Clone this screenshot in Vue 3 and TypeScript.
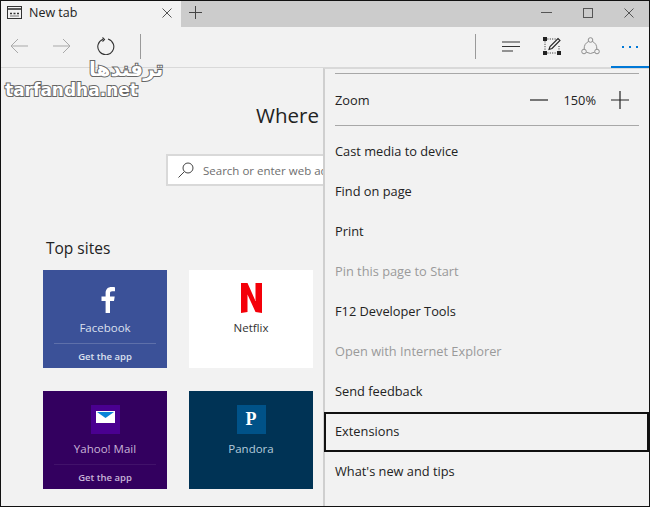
<template>
  <div class="window">
    <!-- Tab strip -->
    <header class="tabbar">
      <div class="tab">
        <svg class="tab-icon" width="15" height="13" viewBox="0 0 15 13" fill="none" stroke="#333">
          <rect x="0.5" y="0.5" width="14" height="12" />
          <path d="M1 3h13" stroke-width="1.6" />
          <path d="M3 7.500h2M6.500 7.500h2M10 7.500h2" stroke-width="1.6" />
          <path d="M3 10h9" stroke-width="1" stroke="#777" />
        </svg>
        <span class="tab-title">New tab</span>
        <svg class="tab-close" width="10" height="10" viewBox="0 0 10 10" stroke="#555" fill="none">
          <path d="M0.5 0.5l9 9M9.500 0.5l-9 9" />
        </svg>
      </div>
      <svg class="new-tab" width="13" height="13" viewBox="0 0 13 13" stroke="#444" fill="none">
        <path d="M6.500 0v13M0 6.500h13" />
      </svg>
      <div class="win-controls">
        <svg width="11" height="11" viewBox="0 0 11 11" stroke="#555" fill="none"><path d="M0 5.500h11" /></svg>
        <svg width="10" height="10" viewBox="0 0 10 10" stroke="#555" fill="none"><rect x="0.5" y="0.5" width="9" height="9" /></svg>
        <svg width="10" height="10" viewBox="0 0 10 10" stroke="#555" fill="none"><path d="M0.5 0.5l9 9M9.500 0.5l-9 9" /></svg>
      </div>
    </header>

    <!-- Navigation toolbar -->
    <nav class="toolbar">
      <svg width="18" height="16" viewBox="0 0 18 16" stroke="#a9a9a9" fill="none">
        <path d="M18 8H1M8 1L1 8l7 7" />
      </svg>
      <svg class="forward" width="18" height="16" viewBox="0 0 18 16" stroke="#a9a9a9" fill="none">
        <path d="M0 8h17M10 1l7 7-7 7" />
      </svg>
      <svg class="refresh" width="18" height="18" viewBox="0 0 18 18" stroke="#333" fill="none">
        <path d="M6 2.200a8 8 0 1 0 5-.2" stroke-width="1.100" />
        <path d="M5.500 0.5l2 2-2 2" stroke-width="1.100" />
      </svg>
      <span class="tool-sep first"></span>
      <span class="spacer"></span>
      <span class="tool-sep"></span>
      <svg class="hub" width="18" height="11" viewBox="0 0 18 11" stroke="#333" fill="none">
        <path d="M0 1h18M0 5.500h18M0 10h11" stroke-width="1.200" />
      </svg>
      <svg class="note" width="18" height="18" viewBox="0 0 18 18" fill="none" stroke="#222">
        <path d="M2 2h12M2 2v14M2 16h14M16 9v7" stroke-dasharray="1 1.400" />
        <rect x="0.5" y="0.5" width="3" height="3" fill="#222" />
        <rect x="0.5" y="14.500" width="3" height="3" fill="#222" />
        <rect x="14.500" y="14.500" width="3" height="3" fill="#222" />
        <path d="M6 12.500l1-3L15 1.500l2 2L9 11.500z" stroke-width="1.100" fill="#f2f2f2" />
      </svg>
      <svg class="share" width="19" height="18" viewBox="0 0 19 18" fill="none" stroke="#8f8f8f">
        <circle cx="9.500" cy="3" r="2.300" />
        <circle cx="3" cy="14.500" r="2.300" />
        <circle cx="16" cy="14.500" r="2.300" />
        <path d="M7.700 4.400a8 8 0 0 0-4.500 7.800M11.300 4.400a8 8 0 0 1 4.500 7.800M5.300 15.200a8 8 0 0 0 8.400 0" />
      </svg>
      <div class="more">
        <i></i><i></i><i></i>
      </div>
    </nav>

    <!-- New tab page -->
    <main class="page">
      <h1 class="headline">Where to next?</h1>
      <div class="search">
        <svg width="16" height="16" viewBox="0 0 16 16" fill="none" stroke="#444">
          <circle cx="10" cy="6" r="5" />
          <path d="M6.300 9.700L0.500 15.500" />
        </svg>
        <span class="search-text">Search or enter web address</span>
      </div>
      <h2 class="sites-title">Top sites</h2>
      <div class="sites">
        <div v-for="site in sites" :key="site.name" class="site" :class="site.cls">
          <div class="site-logo">
            <svg v-if="site.cls === 'facebook'" class="fb-mark" width="14" height="26" viewBox="0 0 14 26">
              <path fill="#fff" d="M9 26V14h4l.7-4.600H9V6.500c0-1.400.4-2.300 2.300-2.300H14V.2C13.500.1 12.100 0 10.500 0 7 0 4.600 2.100 4.600 6V9.400H.5V14h4.100v12z" />
            </svg>
            <svg v-else-if="site.cls === 'netflix'" width="21" height="30" viewBox="0 0 21 30">
              <path fill="#f40009" d="M0 0h6.500l8 18V0H21v30l-6.500-1L6.500 11.500V29L0 30z" />
            </svg>
            <span v-else-if="site.cls === 'yahoo'" class="tile yahoo-tile">
              <svg width="19" height="12" viewBox="0 0 19 12">
                <rect width="19" height="12" fill="#fff" />
                <path d="M1 1h17L9.500 7z" fill="#0a84d8" />
              </svg>
            </span>
            <span v-else class="tile pandora-tile">P</span>
          </div>
          <div class="site-name">{{ site.name }}</div>
          <div v-if="site.app" class="site-app">Get the app</div>
        </div>
      </div>

      <!-- More actions menu -->
      <aside class="menu">
        <div class="menu-rule top"></div>
        <div class="zoom-row">
          <span>Zoom</span>
          <div class="zoom-ctl">
            <svg width="18" height="2" viewBox="0 0 18 2"><path d="M0 1h18" stroke="#222" stroke-width="1.200" /></svg>
            <span class="zoom-val">150%</span>
            <svg width="18" height="18" viewBox="0 0 18 18"><path d="M0 9h18M9 0v18" stroke="#222" stroke-width="1.200" /></svg>
          </div>
        </div>
        <div class="menu-rule"></div>
        <div class="menu-list">
          <div
            v-for="item in items"
            :key="item.label"
            class="menu-item"
            :class="{ disabled: item.disabled, focused: item.focused }"
          >{{ item.label }}</div>
        </div>
      </aside>
    </main>

    <!-- Watermark -->
    <div class="watermark">
      <div class="wm-fa">ترفندها</div>
      <div class="wm-en">tarfandha.net</div>
    </div>
  </div>
</template>

<script setup lang="ts">
interface Site {
  name: string
  cls: string
  app: boolean
}

interface MenuItem {
  label: string
  disabled?: boolean
  focused?: boolean
}

const sites: Site[] = [
  { name: 'Facebook', cls: 'facebook', app: true },
  { name: 'Netflix', cls: 'netflix', app: false },
  { name: 'Yahoo! Mail', cls: 'yahoo', app: true },
  { name: 'Pandora', cls: 'pandora', app: false }
]

const items: MenuItem[] = [
  { label: 'Cast media to device' },
  { label: 'Find on page' },
  { label: 'Print' },
  { label: 'Pin this page to Start', disabled: true },
  { label: 'F12 Developer Tools' },
  { label: 'Open with Internet Explorer', disabled: true },
  { label: 'Send feedback' },
  { label: 'Extensions', focused: true },
  { label: "What's new and tips" }
]
</script>

<style>
html,
body {
  margin: 0;
  overflow: hidden;
}
</style>

<style scoped>
.window {
  position: relative;
  width: 650px;
  height: 507px;
  box-sizing: border-box;
  border: 1px solid #111;
  background: #f2f2f2;
  display: flex;
  flex-direction: column;
  overflow: hidden;
  font-family: "Open Sans", "Noto Sans", sans-serif;
  color: #222;
}

.tabbar {
  height: 26px;
  background: #cccccc;
  display: flex;
  align-items: center;
  flex-shrink: 0;
}

.tab {
  width: 180px;
  height: 100%;
  background: #f2f2f2;
  display: flex;
  align-items: center;
  box-sizing: border-box;
  padding: 0 9px 3px 6px;
}

.tab-title {
  margin-left: 7px;
  font-size: 12.500px;
  flex: 1;
}

.new-tab {
  margin: 0 0 3px 8px;
}

.win-controls {
  margin-left: auto;
  display: flex;
  align-items: center;
  gap: 31px;
  padding: 0 15px 3px 0;
}

.toolbar {
  height: 41px;
  display: flex;
  align-items: center;
  padding: 0 0 2px 9px;
  box-sizing: border-box;
  border-bottom: 1px solid #d9d9d9;
  flex-shrink: 0;
}

.forward {
  margin-left: 25px;
}

.refresh {
  margin-left: 26px;
}

.tool-sep {
  width: 1px;
  height: 25px;
  background: #9a9a9a;
  margin-left: 25px;
}

.spacer {
  flex: 1;
}

.hub {
  margin-left: 26px;
}

.note {
  margin-left: 23px;
}

.share {
  margin-left: 20px;
}

.more {
  align-self: stretch;
  width: 38px;
  margin: 0 0 -3px 11px;
  border-bottom: 2px solid #0078d7;
  box-sizing: border-box;
  display: flex;
  align-items: center;
  justify-content: center;
  gap: 5px;
}

.more i {
  width: 2px;
  height: 2px;
  background: #0078d7;
}

.page {
  flex: 1;
  position: relative;
  min-height: 0;
  overflow: hidden;
}

.headline {
  margin: 33px 0 0;
  width: 322px;
  box-sizing: border-box;
  overflow: hidden;
  font-size: 20.500px;
  font-weight: 400;
  line-height: 28px;
  padding-left: 255px;
  white-space: nowrap;
  color: #222;
}

.search {
  margin: 25px 0 0 165px;
  width: 500px;
  height: 32px;
  box-sizing: border-box;
  background: #fff;
  border: 2px solid #d9d9d9;
  display: flex;
  align-items: center;
  padding-left: 10px;
  gap: 9px;
}

.search-text {
  font-size: 11.500px;
  color: #6e6e6e;
  white-space: nowrap;
}

.sites-title {
  margin: 50px 0 0 45px;
  font-size: 15.500px;
  font-weight: 400;
  line-height: 24px;
  color: #222;
}

.sites {
  margin: 10px 0 0 42px;
  display: grid;
  grid-template-columns: 124px 124px;
  grid-auto-rows: 98px;
  column-gap: 22px;
  row-gap: 23px;
}

.site {
  display: flex;
  flex-direction: column;
  align-items: center;
  position: relative;
}

.site-logo {
  height: 44px;
  margin-top: 6px;
  display: flex;
  align-items: center;
  justify-content: center;
}

.fb-mark {
  margin: 4px 0 0 6px;
}

.site-name {
  margin-top: -1px;
  font-size: 11.500px;
  line-height: 18px;
}

.site-app {
  position: absolute;
  left: 11px;
  right: 11px;
  top: 73px;
  height: 25px;
  line-height: 25px;
  text-align: center;
  font-size: 9.500px;
  font-weight: 600;
  border-top: 1px solid rgba(255, 255, 255, 0.18);
}

.facebook {
  background: #3b5198;
  color: #dbe0ef;
}

.netflix {
  background: #fff;
  color: #333;
}

.yahoo {
  background: #33005f;
  color: #c8b4d8;
}

.yahoo .site-app {
  border-top-color: rgba(255, 255, 255, 0.07);
}

.pandora {
  background: #003355;
  color: #b3cbdc;
}

.tile {
  width: 29px;
  height: 29px;
  display: flex;
  align-items: center;
  justify-content: center;
}

.yahoo-tile {
  background: #4a0090;
  align-items: flex-start;
}

.yahoo-tile svg {
  margin-top: 6px;
}

.pandora-tile {
  background: #005288;
  color: #fff;
  font-family: "Liberation Serif", serif;
  font-weight: 700;
  font-size: 18px;
}

.watermark {
  position: absolute;
  left: 4px;
  top: 58px;
  color: #fff;
  font-family: "DejaVu Sans", sans-serif;
  font-weight: 700;
  line-height: 1;
  pointer-events: none;
  -webkit-text-stroke: 2px #666;
  paint-order: stroke fill;
}

.wm-fa {
  margin-left: 84px;
  font-size: 20px;
  height: 23px;
}

.wm-en {
  font-size: 17px;
}

.menu {
  position: absolute;
  left: 322px;
  top: 0;
  right: 0;
  bottom: 0;
  background: #f2f2f2;
  border-left: 2px solid #cfcfcf;
  border-top: 1px solid #d9d9d9;
  box-sizing: border-box;
}

.menu-rule {
  height: 1px;
  background: #a8a8a8;
  margin: 0 10px 0 10px;
}

.menu-rule.top {
  margin-top: 4px;
}

.zoom-row {
  height: 51px;
  display: flex;
  align-items: center;
  justify-content: space-between;
  padding: 0 20px 0 10px;
  font-size: 12.800px;
}

.zoom-ctl {
  display: flex;
  align-items: center;
  gap: 15px;
}

.menu-list {
  margin-top: 6px;
}

.menu-item {
  height: 40px;
  line-height: 38px;
  box-sizing: border-box;
  padding-left: 10px;
  font-size: 12.800px;
  white-space: nowrap;
}

.menu-item.disabled {
  color: #9a9a9a;
}

.menu-item.focused {
  border: 2px solid #111;
  margin-left: -1px;
  padding-left: 9px;
  line-height: 35px;
}
</style>
